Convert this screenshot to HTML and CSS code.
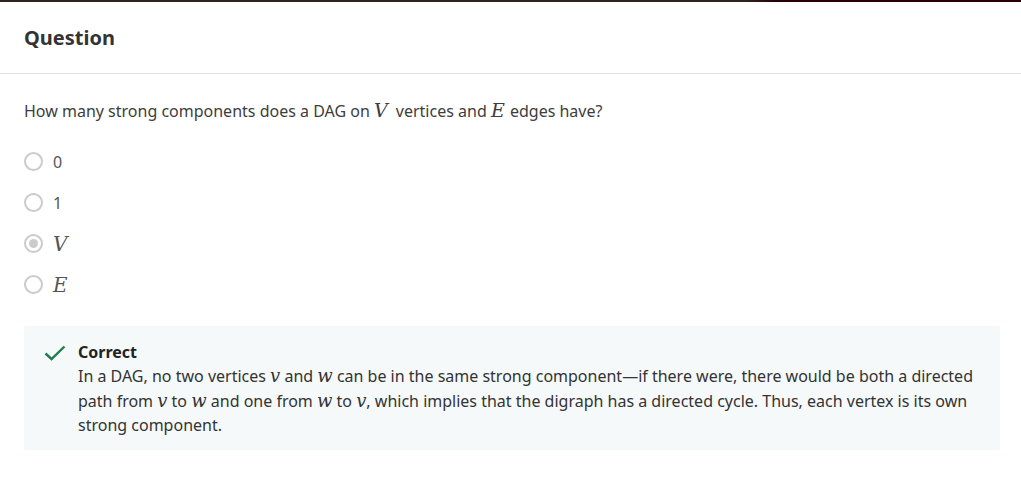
FILE: index.html
```html
<!DOCTYPE html>
<html lang="en">
<head>
<meta charset="utf-8">
<title>Question</title>
<link rel="stylesheet" href="styles.css">
</head>
<body>
<div class="topbar"></div>
<header class="header">
  <h2 class="title">Question</h2>
</header>
<main class="content">
  <p class="question">How many strong components does a DAG on <span class="math big spaced">V</span> vertices and <span class="math big">E</span> edges have?</p>
  <ul class="options">
    <li class="option"><span class="radio"></span><span class="label">0</span></li>
    <li class="option"><span class="radio"></span><span class="label">1</span></li>
    <li class="option"><span class="radio checked"></span><span class="label math">V</span></li>
    <li class="option"><span class="radio"></span><span class="label math">E</span></li>
  </ul>
  <section class="feedback">
    <svg class="check" width="22" height="16" viewBox="0 0 22 16"><path d="M1.5 8.5 L7.5 14 L20.5 1.5" fill="none" stroke="#1e7e4e" stroke-width="2.4"/></svg>
    <div class="fb-body">
      <div class="fb-title">Correct</div>
      <p class="fb-text">In a DAG, no two vertices <span class="math">v</span> and <span class="math">w</span> can be in the same strong component—if there were, there would be both a directed path from <span class="math">v</span> to <span class="math">w</span> and one from <span class="math">w</span> to <span class="math">v</span>, which implies that the digraph has a directed cycle. Thus, each vertex is its own strong component.</p>
    </div>
  </section>
</main>
</body>
</html>
```

FILE: styles.css
```css
* { box-sizing: border-box; }
body {
  margin: 0;
  background: #fff;
  font-family: "Noto Sans", "Open Sans", sans-serif;
  color: #333;
}
.topbar {
  height: 2px;
  background: linear-gradient(to right, #2b2621 0%, #2b2621 73%, #2a0008 76%, #2a0008 100%);
}
.header {
  height: 72px;
  border-bottom: 1px solid #e1e1e1;
  padding: 0 24px;
  display: flex;
  align-items: center;
}
.title {
  margin: 0;
  font-size: 20px;
  font-weight: 700;
  color: #333;
}
.content {
  padding: 25px 21px 0 24px;
}
.question {
  margin: 0;
  font-size: 16px;
  line-height: 24px;
  color: #3d3d3d;
}
.math {
  font-family: "DejaVu Serif", "Liberation Serif", serif;
  font-style: italic;
  line-height: 1;
}
.math.big { font-size: 19px; margin-right: 1px; }
.math.big.spaced { margin-right: 4px; }
.options {
  list-style: none;
  margin: 18px 0 0 0;
  padding: 0;
}
.option {
  height: 41px;
  display: flex;
  align-items: center;
}
.radio {
  width: 19px;
  height: 19px;
  border: 2px solid #cbcbcb;
  border-radius: 50%;
  margin-right: 10px;
  display: flex;
  align-items: center;
  justify-content: center;
}
.radio.checked::after {
  content: "";
  width: 9px;
  height: 9px;
  border-radius: 50%;
  background: #cbcbcb;
}
.label {
  font-size: 16px;
  color: #555;
}
.label.math { font-size: 20px; }
.feedback {
  margin-top: 21px;
  background: #f5f9f9;
  padding: 14px 20px 12px 20px;
  display: flex;
  align-items: flex-start;
}
.check {
  margin-top: 5px;
  margin-right: 12px;
  flex: none;
}
.fb-title {
  font-weight: 700;
  font-size: 16px;
  line-height: 24px;
  color: #222;
}
.fb-text {
  margin: 0;
  font-size: 16px;
  line-height: 24.5px;
  color: #333;
}
.fb-text .math { font-size: 18px; }
```
